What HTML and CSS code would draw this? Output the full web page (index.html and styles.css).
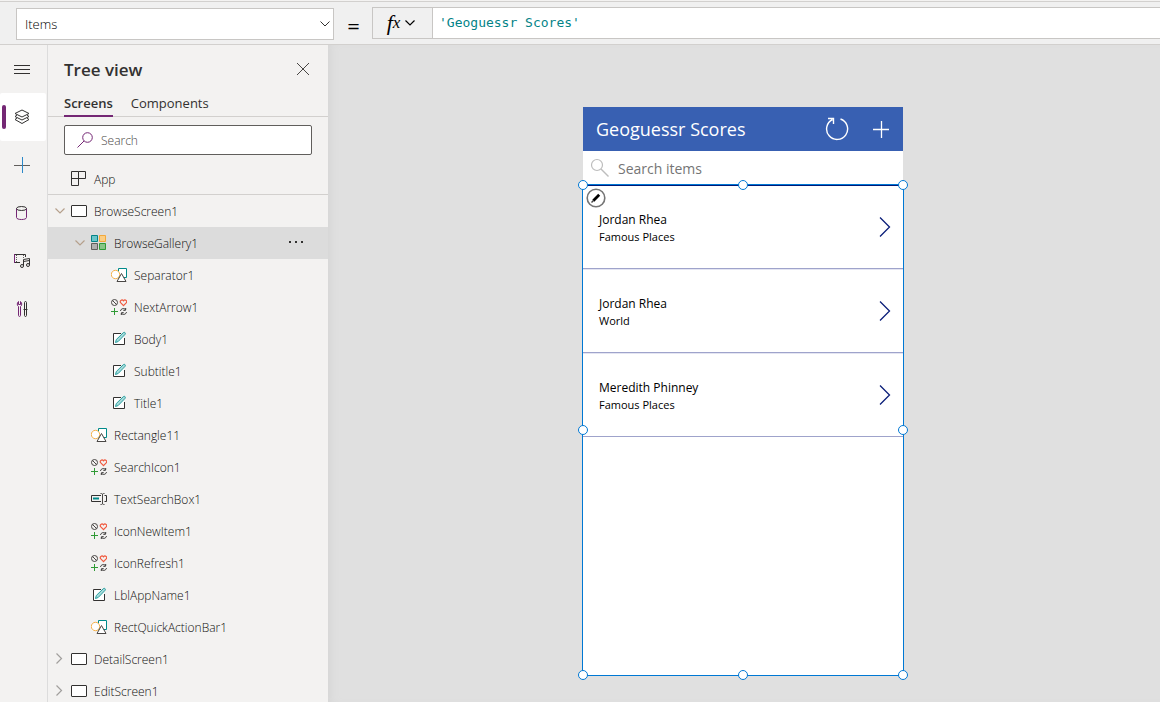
FILE: index.html
```html
<!DOCTYPE html>
<html lang="en">
<head>
<meta charset="utf-8">
<meta name="viewport" content="width=device-width, initial-scale=1">
<title>Geoguessr Scores</title>
<link rel="stylesheet" href="styles.css">
</head>
<body>
<svg class="sprite" aria-hidden="true">
  <symbol id="chev-down" viewBox="0 0 16 16"><path d="M3.500 5.500 8 10l4.500-4.500" fill="none" stroke="currentColor" stroke-width="1.200"/></symbol>
  <symbol id="chev-right" viewBox="0 0 16 16"><path d="M4.500 2.500 9.500 7.500 4.500 12.500" fill="none" stroke="currentColor" stroke-width="1.200"/></symbol>
  <symbol id="screen" viewBox="0 0 16 16"><rect x=".5" y="2.500" width="15" height="11" rx=".5" fill="#fff" stroke="#323130"/></symbol>
  <symbol id="app" viewBox="0 0 16 16"><path d="M.5.500h7v14h-7zM.5 7.500h14v-7h-7" fill="none" stroke="#323130"/></symbol>
  <symbol id="gallery" viewBox="0 0 16 16"><path d="M.5.500h6v6h-6z" fill="#69c5c9" stroke="#038387"/><path d="M8.500.500h6v6h-6z" fill="#fbcd83" stroke="#f2a83b"/><path d="M.5 8.500h6v6h-6z" fill="#b0afae" stroke="#605e5c"/><path d="M8.500 8.500h6v6h-6z" fill="#88c486" stroke="#2f9a35"/></symbol>
  <symbol id="shape" viewBox="0 0 16 16"><path d="M7.500 1.500h8v9h-8z" fill="#fff" stroke="#008a8a"/><circle cx="4.500" cy="7.500" r="4.200" fill="#fff" stroke="#f5b14b"/><path d="M10.500 6.500 15 14.500H6z" fill="#fff" stroke="#484644"/></symbol>
  <symbol id="icons" viewBox="0 0 16 16" fill="none"><circle cx="3.500" cy="3.500" r="3" stroke="#484644"/><path d="m1.400 1.400 4.200 4.200" stroke="#484644"/><path d="M12.500 6.600 9.600 3.700C8.300 2 10.800-.1 12.500 1.800c1.700-1.900 4.200.2 2.900 1.900z" stroke="#f0593e" stroke-width="1.200"/><path d="M3.500 9v7M0 12.500h7" stroke="#2f9a35"/><path d="M9.500 12c.4-2.400 3.500-3.400 5.200-1.200V9m0 2.300h-2.400M15.500 13c-.4 2.400-3.500 3.400-5.200 1.200V16m0-2.300h2.400" stroke="#323130"/></symbol>
  <symbol id="label" viewBox="0 0 16 16"><path d="M10 2.500H2.500v11h11V7" fill="#fff" stroke="#323130"/><path d="m4.500 11.500.8-3L12.400 1.600c1.200-.9 2.600.5 1.700 1.700L7.200 10.500z" fill="#a6dada" stroke="#2aa0a0"/></symbol>
  <symbol id="input" viewBox="0 0 16 16" fill="none"><path d="M10 4.500H.5v6H10M13.500 4.500h2v6h-2" stroke="#323130"/><path d="M2 6.500h6v2H2z" fill="#008a8a"/><path d="M9.500 2.500c1.500 0 2 .2 2 1v9c0 .8-.5 1-2 1M13.500 2.500c-1.500 0-2 .2-2 1v9c0 .8.500 1 2 1" stroke="#484644"/></symbol>
</svg>

<header class="formula-bar">
  <select class="property" aria-label="Property"><option>Items</option></select>
  <span class="equals">=</span>
  <div class="formula">
    <button class="fx" aria-label="Insert function"><span class="fx-f">f</span><span class="fx-x">x</span><svg class="i16"><use href="#chev-down"/></svg></button>
    <input class="expression" type="text" aria-label="Formula" value="'Geoguessr Scores'">
  </div>
</header>

<div class="workspace">
  <nav class="rail" aria-label="Tools">
    <button class="rail-item" aria-label="Expand"><svg class="i16" viewBox="0 0 16 16"><path d="M0 4.500h16M0 8.500h16M0 12.500h16" stroke="#323130"/></svg></button>
    <button class="rail-item active" aria-label="Tree view"><svg class="i16" viewBox="0 0 16 16" fill="none" stroke="#323130"><path d="M8 1 15 4.500 8 8 1 4.500zM3 6 1 7.500 8 11l7-3.500L13 6M3 9l-2 1.500L8 14.500l7-4L13 9"/></svg></button>
    <button class="rail-item" aria-label="Insert"><svg class="i16" viewBox="0 0 16 16"><path d="M0 8.500h16" stroke="#605e5c"/><path d="M8.500 0v16" stroke="#2b88c8"/></svg></button>
    <button class="rail-item" aria-label="Data"><svg class="i16" viewBox="0 0 16 16" fill="none"><path d="M2.500 3.500v9c0 2.700 10 2.700 10 0v-9" stroke="#742774"/><ellipse cx="7.500" cy="3.500" rx="5" ry="2" stroke="#323130"/></svg></button>
    <button class="rail-item" aria-label="Media"><svg class="i16" viewBox="0 0 16 16" fill="none"><path d="M11.500 4V1.500H.5v8H6" stroke="#323130"/><path d="M.5 1v9" stroke="#742774"/><path d="M2.500 2v7M9.500 2v3" stroke="#605e5c" stroke-dasharray="1 1"/><path d="M9.500 13V6.500l6-1V12M9.500 8.500l6-1" stroke="#323130"/><circle cx="8" cy="13" r="1.500" stroke="#323130"/><circle cx="14" cy="12" r="1.500" stroke="#323130"/></svg></button>
    <button class="rail-item" aria-label="Advanced tools"><svg class="i16" viewBox="0 0 16 16" fill="none"><path d="M4.500 5.500v9c0 1.200 2 1.200 2 0v-9C8.300 4.500 8 1.500 6.500.500v3h-2v-3C3 1.500 2.700 4.500 4.500 5.500z" stroke="#742774"/><path d="M10.500 8V1.500c0-1.300 2-1.300 2 0V8M9.500 8.500h4M10.500 9v5.500c0 1.300 2 1.300 2 0V9" stroke="#323130"/></svg></button>
  </nav>

  <aside class="panel">
    <div class="panel-head">
      <h1 class="panel-title">Tree view</h1>
      <button class="close" aria-label="Close"><svg class="i16" viewBox="0 0 16 16"><path d="m2 2 12 12M14 2 2 14" stroke="#484644"/></svg></button>
    </div>
    <div class="tabs" role="tablist">
      <button class="tab selected" role="tab" aria-selected="true">Screens</button>
      <button class="tab" role="tab" aria-selected="false">Components</button>
    </div>
    <label class="search">
      <svg class="i16" viewBox="0 0 16 16" fill="none"><circle cx="10.500" cy="5.500" r="4.800" stroke="#742774"/><path d="M7 9 .5 15.500" stroke="#742774"/></svg>
      <input type="text" placeholder="Search" aria-label="Search">
    </label>
    <button class="row app-row"><svg class="i16"><use href="#app"/></svg>App</button>
    <ul class="tree">
      <li class="row"><svg class="i16 twist open"><use href="#chev-down"/></svg><svg class="i16"><use href="#screen"/></svg>BrowseScreen1</li>
      <li class="row level2 current"><svg class="i16 twist open"><use href="#chev-down"/></svg><svg class="i16"><use href="#gallery"/></svg>BrowseGallery1<button class="more" aria-label="More"><svg class="i16" viewBox="0 0 16 16" fill="#323130"><path d="M1 6h2v2H1zM7 6h2v2H7zM13 6h2v2h-2z"/></svg></button></li>
      <li class="row level3"><svg class="i16"><use href="#shape"/></svg>Separator1</li>
      <li class="row level3"><svg class="i16"><use href="#icons"/></svg>NextArrow1</li>
      <li class="row level3"><svg class="i16"><use href="#label"/></svg>Body1</li>
      <li class="row level3"><svg class="i16"><use href="#label"/></svg>Subtitle1</li>
      <li class="row level3"><svg class="i16"><use href="#label"/></svg>Title1</li>
      <li class="row leaf2"><svg class="i16"><use href="#shape"/></svg>Rectangle11</li>
      <li class="row leaf2"><svg class="i16"><use href="#icons"/></svg>SearchIcon1</li>
      <li class="row leaf2"><svg class="i16"><use href="#input"/></svg>TextSearchBox1</li>
      <li class="row leaf2"><svg class="i16"><use href="#icons"/></svg>IconNewItem1</li>
      <li class="row leaf2"><svg class="i16"><use href="#icons"/></svg>IconRefresh1</li>
      <li class="row leaf2"><svg class="i16"><use href="#label"/></svg>LblAppName1</li>
      <li class="row leaf2"><svg class="i16"><use href="#shape"/></svg>RectQuickActionBar1</li>
      <li class="row"><svg class="i16 twist"><use href="#chev-right"/></svg><svg class="i16"><use href="#screen"/></svg>DetailScreen1</li>
      <li class="row"><svg class="i16 twist"><use href="#chev-right"/></svg><svg class="i16"><use href="#screen"/></svg>EditScreen1</li>
    </ul>
  </aside>

  <main class="canvas">
    <section class="phone">
      <div class="app-bar">
        <h2 class="app-title">Geoguessr Scores</h2>
        <button class="app-action" aria-label="Refresh"><svg class="i24" viewBox="0 0 24 24" fill="none" stroke="#fff" stroke-width="1.400"><path d="M15.500 2A10.500 10.500 0 1 1 7.500 2.500M3 1.500h5.500v5.500"/></svg></button>
        <button class="app-action" aria-label="New item"><svg class="i24" viewBox="0 0 24 24"><path d="M4 12.500h16M12.500 4v17" stroke="#fff" stroke-width="1.300"/></svg></button>
      </div>
      <label class="item-search">
        <svg class="i20" viewBox="0 0 20 20" fill="none" stroke="#bdbdbd"><circle cx="7" cy="7" r="5.500" stroke-width="1.200"/><path d="m11 11 7.500 7.500" stroke-width="1.400"/></svg>
        <input type="text" placeholder="Search items" aria-label="Search items">
      </label>
      <div class="gallery">
        <article class="card"><div class="entry"><p class="name">Jordan Rhea</p><p class="map">Famous Places</p></div><button class="next" aria-label="Open"><svg class="arrow" viewBox="0 0 12 20"><path d="m1 .5 9.500 9.500L1 19.500" fill="none" stroke="#0b1f7a" stroke-width="1.300"/></svg></button></article>
        <article class="card"><div class="entry"><p class="name">Jordan Rhea</p><p class="map">World</p></div><button class="next" aria-label="Open"><svg class="arrow" viewBox="0 0 12 20"><path d="m1 .5 9.500 9.500L1 19.500" fill="none" stroke="#0b1f7a" stroke-width="1.300"/></svg></button></article>
        <article class="card"><div class="entry"><p class="name">Meredith Phinney</p><p class="map">Famous Places</p></div><button class="next" aria-label="Open"><svg class="arrow" viewBox="0 0 12 20"><path d="m1 .5 9.500 9.500L1 19.500" fill="none" stroke="#0b1f7a" stroke-width="1.300"/></svg></button></article>
        <button class="edit" aria-label="Edit gallery"><svg class="i20" viewBox="0 0 20 20"><circle cx="10" cy="10" r="8.800" fill="#fff" stroke="#757575" stroke-width="1.600"/><path d="m7.300 12.700 5.900-5.900" stroke="#000" stroke-width="2.800"/><path d="m5.500 14.500 2-2" stroke="#444" stroke-width="1.500"/></svg></button>
        <i class="handle tl"></i><i class="handle tc"></i><i class="handle tr"></i>
        <i class="handle ml"></i><i class="handle mr"></i>
        <i class="handle bl"></i><i class="handle bc"></i><i class="handle br"></i>
      </div>
    </section>
  </main>
</div>
</body>
</html>
```
FILE: styles.css
```css
* { box-sizing: border-box; }
body {
  margin: 0;
  height: 100vh;
  display: flex;
  flex-direction: column;
  overflow: hidden;
  background: #f3f2f1;
  color: #323130;
  font: 12px/16px "Open Sans", "Noto Sans", sans-serif;
}
button, input, select { font: inherit; color: inherit; margin: 0; }
button { border: 0; padding: 0; background: none; }
input { border: 0; outline: 0; min-width: 0; background: none; }
h1, h2, p, ul { margin: 0; padding: 0; }
svg { display: block; flex: none; }
.sprite { position: absolute; width: 0; height: 0; }
.i16 { width: 16px; height: 16px; }
.i20 { width: 20px; height: 20px; }
.i24 { width: 24px; height: 24px; }

/* Formula bar */
.formula-bar {
  display: flex;
  align-items: center;
  flex: none;
  height: 44px;
  margin-top: 1px;
  padding: 2px 0 0 16px;
  background: #f0f0f0;
  border-top: 1px solid #d2d0ce;
  border-bottom: 1px solid #d2d0ce;
}
.property {
  appearance: none;
  width: 318px;
  height: 32px;
  padding: 0 8px;
  border: 1px solid #c8c6c4;
  border-radius: 0;
  color: #000;
  font-size: 13px;
  font-weight: 350;
  background: #fff url("data:image/svg+xml,%3Csvg xmlns='http://www.w3.org/2000/svg' viewBox='0 0 16 16'%3E%3Cpath d='M3.500 5.500 8 10l4.500-4.500' fill='none' stroke='%23323130'/%3E%3C/svg%3E") right 0 center / 16px 16px no-repeat;
}
.equals { width: 38px; padding: 2px 0 0 1px; text-align: center; font-size: 22px; line-height: 24px; color: #000; }
.formula { display: flex; flex: 1; height: 32px; margin-bottom: 2px; border: 1px solid #c8c6c4; border-right: 0; }
.fx {
  display: flex;
  align-items: center;
  justify-content: center;
  width: 60px;
  border-right: 1px solid #c8c6c4;
  color: #000;
  font-family: "Liberation Serif", serif;
  font-style: italic;
}
.fx-f { font-size: 22px; }
.fx-x { font-size: 17px; }
.fx svg { margin-left: 2px; }
.expression { flex: 1; padding: 0 6px; background: #fff; color: #038387; font: 13px/20px "DejaVu Sans Mono", monospace; }

/* Tool rail */
.workspace { display: flex; flex: 1; min-height: 0; }
.rail { flex: none; width: 48px; border-right: 1px solid #dcdcdc; }
.rail-item { display: flex; align-items: center; width: 46px; height: 48px; padding-left: 14px; }
.rail-item.active { padding-left: 2px; gap: 8px; background: #fff; border-radius: 2px; }
.rail-item.active::before { content: ""; width: 4px; height: 24px; border-radius: 2px; background: #742774; }

/* Tree panel */
.panel { flex: none; width: 280px; overflow: hidden; }
.panel-head { display: flex; align-items: center; justify-content: space-between; height: 48px; padding: 0 17px 0 16px; }
.panel-title { padding-top: 2px; font-size: 17px; line-height: 24px; font-weight: 550; }
.tabs { display: flex; gap: 18px; height: 24px; padding-left: 16px; border-bottom: 1px solid #d2d0ce; }
.tab { height: 24px; padding-bottom: 4px; font-size: 13px; line-height: 20px; }
.tab.selected { font-weight: 600; border-bottom: 2px solid #742774; }
.search { display: flex; align-items: center; gap: 8px; height: 30px; margin: 8px 16px; padding-left: 12px; background: #fff; border: 1px solid #605e5c; border-radius: 2px; }
.search input { flex: 1; padding: 2px 0 0; font-weight: 350; }
.search input::placeholder { color: #484644; opacity: 1; }
.row { display: flex; align-items: center; gap: 7px; height: 32px; padding: 2px 0 0 4px; list-style: none; color: #11100f; font-weight: 350; }
.row svg { margin-bottom: 2px; }
.row .twist { margin-right: -4px; color: #a19f9d; }
.row .open { color: #b5a08c; }
.app-row { width: 100%; padding-left: 23px; border-bottom: 1px solid #d2d0ce; }
.level2 { padding-left: 24px; }
.level3 { padding-left: 63px; }
.leaf2 { padding-left: 43px; }
.current { background: #dcdcdc; }
.more { margin-left: auto; padding-right: 24px; }

/* App preview */
.canvas { display: flex; flex: 1; justify-content: center; align-items: flex-start; min-width: 0; padding: 62px 2px 0 0; background: #e0e0e0; box-shadow: inset 8px 0 12px -8px #d0d0d0; }
.phone { width: 320px; background: #fff; }
.app-bar { display: flex; align-items: center; height: 44px; padding: 0 10px 0 13px; gap: 20px; background: #3860b2; color: #fff; }
.app-title { flex: 1; font-size: 18px; line-height: 24px; font-weight: 500; }
.item-search { display: flex; align-items: center; gap: 8px; height: 34px; padding-left: 7px; }
.item-search input { flex: 1; padding: 2px 0 0; font-size: 14px; line-height: 20px; }
.item-search input::placeholder { color: #757575; opacity: 1; }
.gallery { position: relative; height: 492px; margin: -1px -1px 0; border: 1px solid #0078d4; box-shadow: inset 0 1px #001a78; }
.card { display: flex; align-items: center; justify-content: space-between; height: 84px; padding: 0 12px 0 16px; border-bottom: 1px solid #9fa3cb; color: #000; }
.card + .card { box-shadow: inset 0 1px #e4e5f2; }
.entry { padding-top: 2px; }
.name { line-height: 18px; }
.map { font-size: 11px; }
.arrow { width: 12px; height: 20px; }
.edit { position: absolute; left: 3px; top: 3px; }
.handle { position: absolute; width: 10px; height: 10px; border: 1px solid #0078d4; border-radius: 50%; background: #fff; transform: translate(-50%, -50%); }
.tl, .ml, .bl { left: 0; }
.tc, .bc { left: 50%; }
.tr, .mr, .br { left: 100%; }
.tl, .tc, .tr { top: 0; }
.ml, .mr { top: 50%; }
.bl, .bc, .br { top: 100%; }
```
